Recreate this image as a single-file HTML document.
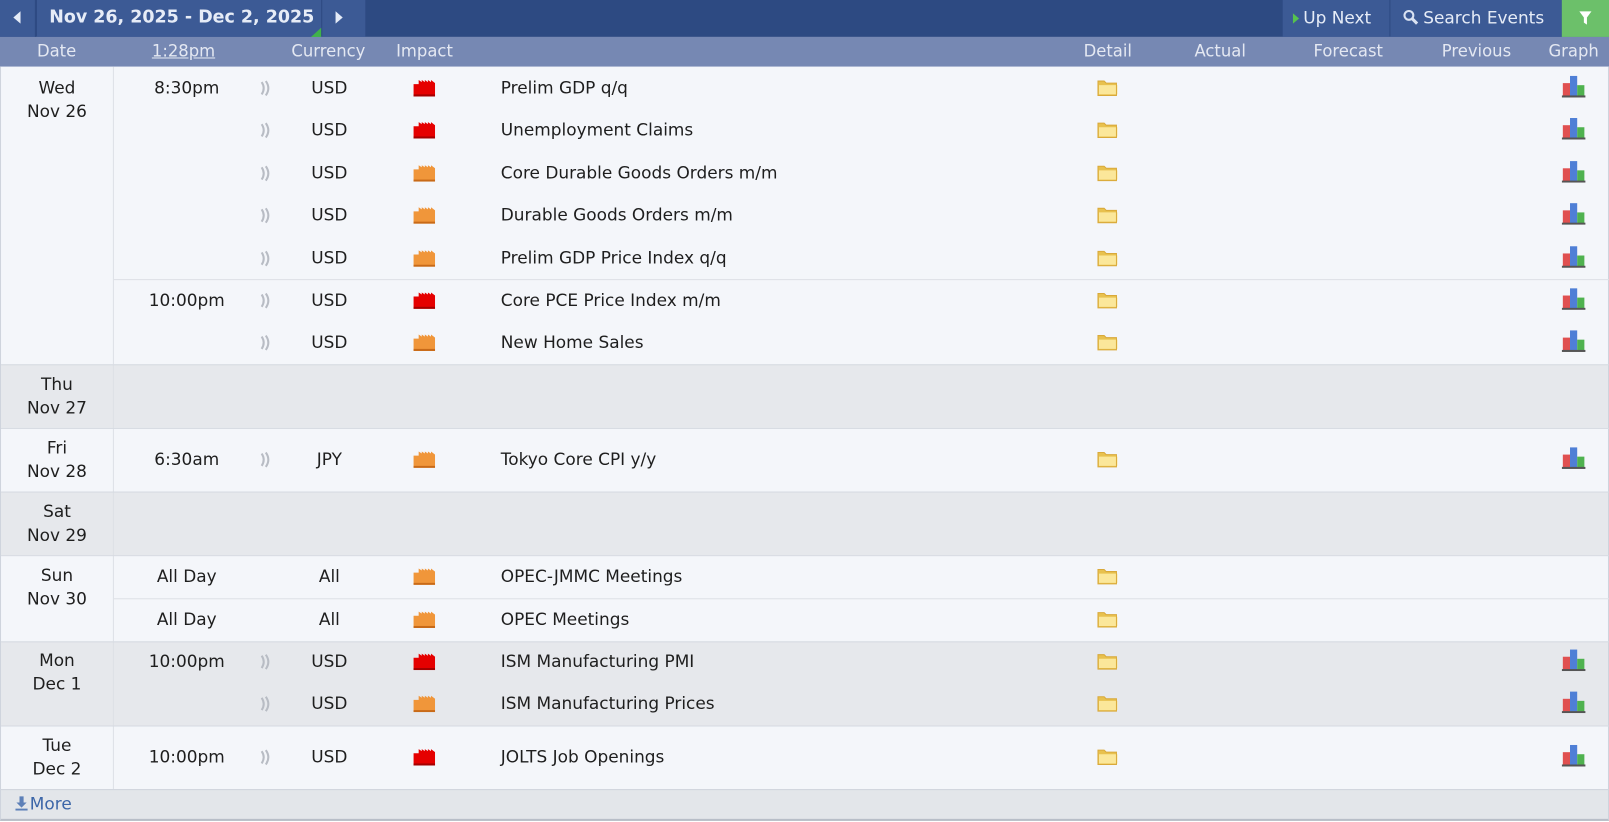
<!DOCTYPE html>
<html><head><meta charset="utf-8"><style>
*{margin:0;padding:0;box-sizing:border-box}
body{width:1609px;height:822px;background:#fff;overflow:hidden}
#w{position:absolute;left:0;top:0;width:1568px;height:801px;transform:scale(1.02615);transform-origin:0 0;font-family:"DejaVu Sans","Liberation Sans",sans-serif;font-size:16.5px;color:#1e1e1e}
.a{position:absolute}
.top{left:0;top:0;width:1568px;height:36px;background:#2d4a82}
.hdr{left:0;top:36px;width:1568px;height:29px;background:#7688b3;color:#e4e8f2;font-size:16px}
.hdr span{position:absolute;top:4px}
.body{left:0;top:65px;width:1568px;height:704px;background:#f4f6fa;border-left:1px solid #cfd4dd;border-right:1px solid #cfd4dd}
.grey{background:#e6e8ec}
.r{position:absolute;left:110px;width:1458px;height:41px}
.r>*{position:absolute;top:0;line-height:41px}
.t{left:0;width:144px;text-align:center}
.c{left:180px;width:62px;text-align:center}
.ti{left:378px}
.snd{left:143px;top:13px!important;line-height:0!important}
.imp{left:293px;top:11px!important;line-height:0!important}
.fol{left:959px;top:12px!important;line-height:0!important}
.gr{left:1412px;top:8px!important;line-height:0!important}
.d{position:absolute;left:0;width:110px;text-align:center;line-height:23px;border-right:1px solid #dde0e6}
.hl{position:absolute;left:110px;width:1458px;height:1px;background:#dde0e6}
.fl{position:absolute;left:0;width:1568px;height:1px;background:#d6dae1}
</style></head><body>
<svg width="0" height="0" style="position:absolute"><defs>
<symbol id="snd" viewBox="0 0 12 16"><path d="M2 2q4 6 0 12" stroke="#b8bcc4" stroke-width="2" fill="none"/><path d="M6 1q5 7 0 14" stroke="#b8bcc4" stroke-width="2" fill="none"/></symbol>
<symbol id="red" viewBox="0 0 21 18"><path d="M0 6h5V2l3 2V2l3 2V2l3 2V2l3 2V2l4 3v13H0z" fill="#e50000"/><rect x="0" y="16" width="21" height="2" fill="#a40000"/></symbol>
<symbol id="org" viewBox="0 0 21 18"><path d="M0 6h5V2l3 2V2l3 2V2l3 2V2l3 2V2l4 3v13H0z" fill="#f0963a"/><rect x="0" y="16" width="21" height="2" fill="#c86a18"/></symbol>
<symbol id="fol" viewBox="0 0 21 17"><path d="M1 2h6l2 2h10v12H1z" fill="#e8c14e"/><path d="M2 6h18v9H2z" fill="#fbe79a"/><path d="M1 2h6l2 2h10v12H1z" fill="none" stroke="#d9a93a"/></symbol>
<symbol id="gr" viewBox="0 0 24 22"><rect x="1" y="8" width="7" height="13" fill="#e05050"/><rect x="8" y="1" width="7" height="20" fill="#4f7fd6"/><rect x="15" y="10" width="7" height="11" fill="#4fb24f"/><rect x="0" y="20" width="23" height="2" fill="#555"/></symbol>
</defs></svg>
<div id="w">
<div class="a top"></div>
<div class="a" style="left:0;top:0;width:35px;height:36px;background:#3c5a95;border-right:1px solid #2d4a82"></div>
<div class="a" style="left:13px;top:11px;width:0;height:0;border-top:6px solid transparent;border-bottom:6px solid transparent;border-right:7px solid #e4ebf7"></div>
<div class="a" style="left:36px;top:0;width:277px;height:36px;background:#3c5a95;color:#e6ecf7;font-weight:bold;font-size:17px;line-height:35px;padding-left:12px">Nov 26, 2025 - Dec 2, 2025</div>
<div class="a" style="left:303px;top:27px;width:0;height:0;border-left:10px solid transparent;border-bottom:9px solid #3fb24a"></div>
<div class="a" style="left:314px;top:0;width:42px;height:36px;background:#3c5a95"></div>
<div class="a" style="left:327px;top:11px;width:0;height:0;border-top:6px solid transparent;border-bottom:6px solid transparent;border-left:7px solid #e4ebf7"></div>
<div class="a" style="left:1250px;top:0;width:104px;height:36px;background:#3c5a95;color:#e6ecf7;line-height:35px;font-size:16.5px;padding-left:10px"><span style="display:inline-block;width:0;height:0;border-top:5px solid transparent;border-bottom:5px solid transparent;border-left:6px solid #56c24e;margin-right:4px"></span>Up Next</div>
<div class="a" style="left:1355px;top:0;width:167px;height:36px;background:#3c5a95;color:#e6ecf7;line-height:35px;font-size:16.5px;padding-left:12px"><svg width="16" height="16" viewBox="0 0 16 16" style="vertical-align:-2px;margin-right:4px"><circle cx="6" cy="6" r="4.3" stroke="#d9e2f2" stroke-width="2" fill="none"/><path d="M9 9l5 5" stroke="#d9e2f2" stroke-width="3"/></svg>Search Events</div>
<div class="a" style="left:1522px;top:0;width:46px;height:36px;background:#6cc06a"><svg class="a" style="left:17px;top:11px" width="12" height="14" viewBox="0 0 12 14"><path d="M0 0h12L7.5 6v7l-3-2V6z" fill="#fff"/></svg></div>

<div class="a hdr">
<span style="left:36px">Date</span>
<span style="left:148px;text-decoration:underline">1:28pm</span>
<span style="left:284px">Currency</span>
<span style="left:386px">Impact</span>
<span style="left:1056px">Detail</span>
<span style="left:1164px">Actual</span>
<span style="left:1280px">Forecast</span>
<span style="left:1405px">Previous</span>
<span style="left:1509px">Graph</span>
</div>

<div class="a body">
<div class="d" style="top:0;height:290px;padding-top:9px">Wed<br>Nov 26</div>
<div class="a grey" style="left:0;top:290px;width:1566px;height:62px"></div>
<div class="d" style="top:290px;height:62px;padding-top:8px">Thu<br>Nov 27</div>
<div class="d" style="top:352px;height:62px;padding-top:8px">Fri<br>Nov 28</div>
<div class="a grey" style="left:0;top:414px;width:1566px;height:62px"></div>
<div class="d" style="top:414px;height:62px;padding-top:8px">Sat<br>Nov 29</div>
<div class="d" style="top:476px;height:84px;padding-top:8px">Sun<br>Nov 30</div>
<div class="a grey" style="left:0;top:560px;width:1566px;height:82px"></div>
<div class="d" style="top:560px;height:82px;padding-top:7px">Mon<br>Dec 1</div>
<div class="d" style="top:642px;height:62px;padding-top:8px">Tue<br>Dec 2</div>
<div class="fl" style="top:290px"></div><div class="fl" style="top:352px"></div><div class="fl" style="top:414px"></div><div class="fl" style="top:476px"></div><div class="fl" style="top:560px"></div><div class="fl" style="top:642px"></div>
<div class="hl" style="top:207px"></div><div class="hl" style="top:518px"></div>
</div>

<div class="a" style="left:0;top:65px">
<div class="r" style="top:0"><span class="t">8:30pm</span><svg class="snd" width="12" height="16"><use href="#snd"/></svg><span class="c">USD</span><svg class="imp" width="21" height="18"><use href="#red"/></svg><span class="ti">Prelim GDP q/q</span><svg class="fol" width="21" height="17"><use href="#fol"/></svg><svg class="gr" width="24" height="22"><use href="#gr"/></svg></div>
<div class="r" style="top:41px"><svg class="snd" width="12" height="16"><use href="#snd"/></svg><span class="c">USD</span><svg class="imp" width="21" height="18"><use href="#red"/></svg><span class="ti">Unemployment Claims</span><svg class="fol" width="21" height="17"><use href="#fol"/></svg><svg class="gr" width="24" height="22"><use href="#gr"/></svg></div>
<div class="r" style="top:83px"><svg class="snd" width="12" height="16"><use href="#snd"/></svg><span class="c">USD</span><svg class="imp" width="21" height="18"><use href="#org"/></svg><span class="ti">Core Durable Goods Orders m/m</span><svg class="fol" width="21" height="17"><use href="#fol"/></svg><svg class="gr" width="24" height="22"><use href="#gr"/></svg></div>
<div class="r" style="top:124px"><svg class="snd" width="12" height="16"><use href="#snd"/></svg><span class="c">USD</span><svg class="imp" width="21" height="18"><use href="#org"/></svg><span class="ti">Durable Goods Orders m/m</span><svg class="fol" width="21" height="17"><use href="#fol"/></svg><svg class="gr" width="24" height="22"><use href="#gr"/></svg></div>
<div class="r" style="top:166px"><svg class="snd" width="12" height="16"><use href="#snd"/></svg><span class="c">USD</span><svg class="imp" width="21" height="18"><use href="#org"/></svg><span class="ti">Prelim GDP Price Index q/q</span><svg class="fol" width="21" height="17"><use href="#fol"/></svg><svg class="gr" width="24" height="22"><use href="#gr"/></svg></div>
<div class="r" style="top:207px"><span class="t">10:00pm</span><svg class="snd" width="12" height="16"><use href="#snd"/></svg><span class="c">USD</span><svg class="imp" width="21" height="18"><use href="#red"/></svg><span class="ti">Core PCE Price Index m/m</span><svg class="fol" width="21" height="17"><use href="#fol"/></svg><svg class="gr" width="24" height="22"><use href="#gr"/></svg></div>
<div class="r" style="top:248px"><svg class="snd" width="12" height="16"><use href="#snd"/></svg><span class="c">USD</span><svg class="imp" width="21" height="18"><use href="#org"/></svg><span class="ti">New Home Sales</span><svg class="fol" width="21" height="17"><use href="#fol"/></svg><svg class="gr" width="24" height="22"><use href="#gr"/></svg></div>
<div class="r" style="top:362px"><span class="t">6:30am</span><svg class="snd" width="12" height="16"><use href="#snd"/></svg><span class="c">JPY</span><svg class="imp" width="21" height="18"><use href="#org"/></svg><span class="ti">Tokyo Core CPI y/y</span><svg class="fol" width="21" height="17"><use href="#fol"/></svg><svg class="gr" width="24" height="22"><use href="#gr"/></svg></div>
<div class="r" style="top:476px"><span class="t">All Day</span><span class="c">All</span><svg class="imp" width="21" height="18"><use href="#org"/></svg><span class="ti">OPEC-JMMC Meetings</span><svg class="fol" width="21" height="17"><use href="#fol"/></svg></div>
<div class="r" style="top:518px"><span class="t">All Day</span><span class="c">All</span><svg class="imp" width="21" height="18"><use href="#org"/></svg><span class="ti">OPEC Meetings</span><svg class="fol" width="21" height="17"><use href="#fol"/></svg></div>
<div class="r" style="top:559px"><span class="t">10:00pm</span><svg class="snd" width="12" height="16"><use href="#snd"/></svg><span class="c">USD</span><svg class="imp" width="21" height="18"><use href="#red"/></svg><span class="ti">ISM Manufacturing PMI</span><svg class="fol" width="21" height="17"><use href="#fol"/></svg><svg class="gr" width="24" height="22"><use href="#gr"/></svg></div>
<div class="r" style="top:600px"><svg class="snd" width="12" height="16"><use href="#snd"/></svg><span class="c">USD</span><svg class="imp" width="21" height="18"><use href="#org"/></svg><span class="ti">ISM Manufacturing Prices</span><svg class="fol" width="21" height="17"><use href="#fol"/></svg><svg class="gr" width="24" height="22"><use href="#gr"/></svg></div>
<div class="r" style="top:652px"><span class="t">10:00pm</span><svg class="snd" width="12" height="16"><use href="#snd"/></svg><span class="c">USD</span><svg class="imp" width="21" height="18"><use href="#red"/></svg><span class="ti">JOLTS Job Openings</span><svg class="fol" width="21" height="17"><use href="#fol"/></svg><svg class="gr" width="24" height="22"><use href="#gr"/></svg></div>
</div>

<div class="a" style="left:0;top:769px;width:1568px;height:31px;background:#e3e6ea;border:1px solid #cfd4dd;border-bottom:2px solid #b8bec8;color:#3c66a8;font-size:16.5px;line-height:28px;padding-left:14px"><svg width="12" height="14" viewBox="0 0 12 14" style="vertical-align:-1px;margin-right:2px"><path d="M4 0h4v6h3L6 11 1 6h3z M0 12h12v2H0z" fill="#5d80b8"/></svg>More</div>
</div>
</body></html>
